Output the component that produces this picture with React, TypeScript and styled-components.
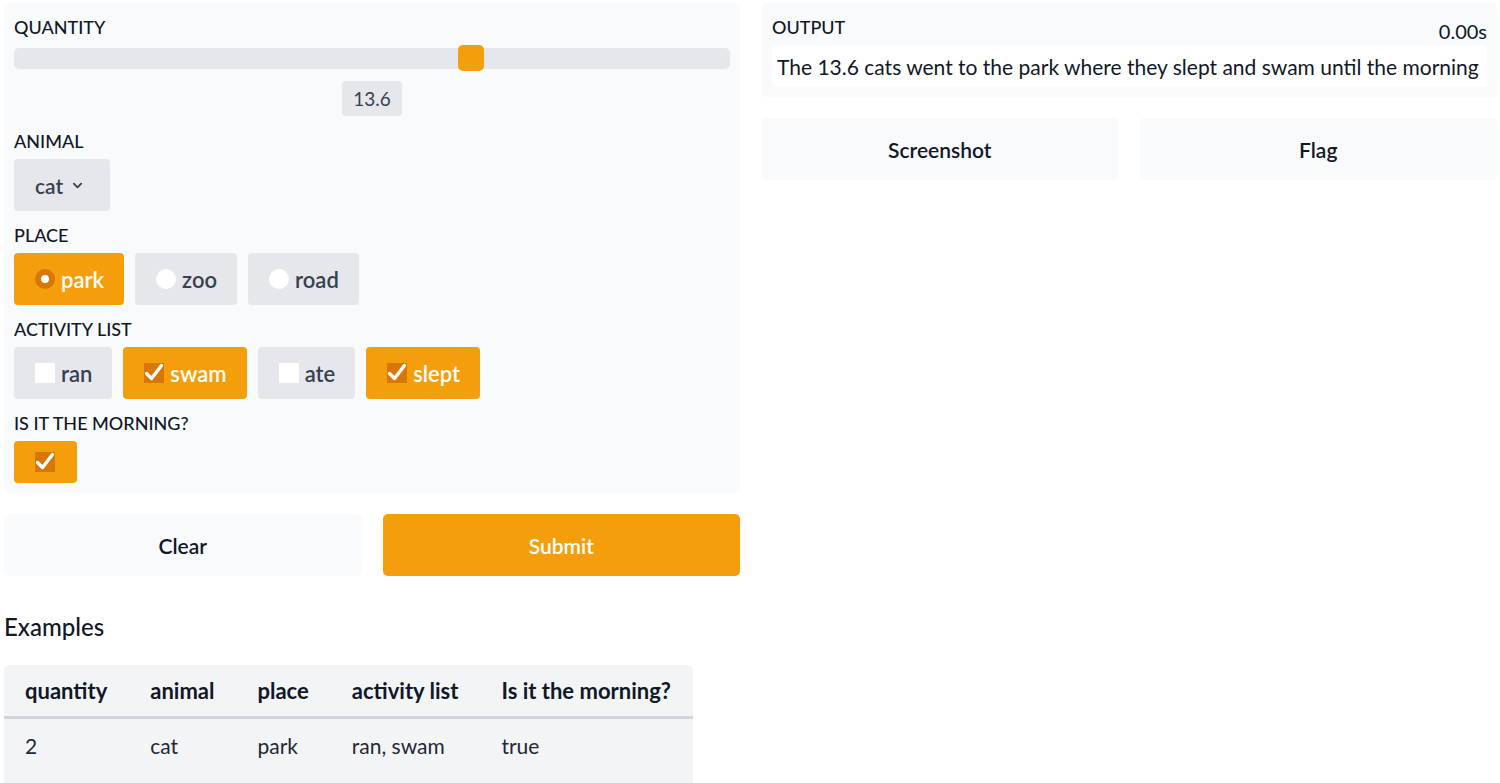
import React from "react";
import styled, { createGlobalStyle } from "styled-components";

const Global = createGlobalStyle`
  html, body { margin: 0; padding: 0; background: #ffffff; }
  body { font-family: Lato, "Noto Sans", sans-serif; color: #111827; }
  * { box-sizing: border-box; }
`;

const Page = styled.div`
  display: grid;
  grid-template-columns: 736px 736px;
  column-gap: 21px;
  padding: 3px 3px 0 4px;
  align-items: start;
`;

const Column = styled.div`
  display: flex;
  flex-direction: column;
`;

const Panel = styled.div`
  background: #f9fafb;
  border-radius: 5px;
  padding: 10px 10px 10px 10px;
  display: flex;
  flex-direction: column;
  gap: 10px;
`;

const Field = styled.div`
  display: flex;
  flex-direction: column;
  align-items: flex-start;
`;

const Label = styled.div`
  font-size: 18px;
  line-height: 28px;
  font-weight: 500;
  text-transform: uppercase;
  color: #111827;
  margin-bottom: 4px;
`;

const SliderWrap = styled.div`
  position: relative;
  width: 100%;
  height: 26px;
  display: flex;
  align-items: center;
`;

const Track = styled.div`
  width: 100%;
  height: 21px;
  background: #e5e7eb;
  border-radius: 5px;
`;

const Thumb = styled.div`
  position: absolute;
  top: 0;
  width: 26px;
  height: 26px;
  border-radius: 5px;
  background: #f59e0b;
`;

const ValueRow = styled.div`
  width: 100%;
  display: flex;
  justify-content: center;
  margin-top: 10px;
  margin-bottom: 1px;
`;

const ValueBox = styled.div`
  background: #e5e7eb;
  border-radius: 4px;
  width: 60px;
  height: 35px;
  display: flex;
  align-items: center;
  justify-content: center;
  font-size: 19px;
  color: #374151;
`;

const Dropdown = styled.div`
  background: #e5e7eb;
  border-radius: 4px;
  height: 52px;
  padding: 0 27px 0 21px;
  display: flex;
  align-items: center;
  gap: 9px;
  font-size: 21px;
  font-weight: 600;
  color: #374151;
`;

const OptionRow = styled.div`
  display: flex;
  gap: 11px;
`;

const Pill = styled.div<{ $on?: boolean }>`
  height: 52px;
  padding: 0 20px 0 21px;
  border-radius: 4px;
  display: flex;
  align-items: center;
  gap: 6px;
  font-size: 22px;
  font-weight: 600;
  background: ${(p) => (p.$on ? "#f59e0b" : "#e5e7eb")};
  color: ${(p) => (p.$on ? "#ffffff" : "#374151")};
`;

const SmallPill = styled(Pill)`
  height: 42px;
  padding: 0 22px 0 21px;
`;

const Radio = styled.span<{ $on?: boolean }>`
  width: 20px;
  height: 20px;
  border-radius: 50%;
  background: ${(p) => (p.$on ? "#d97706" : "#ffffff")};
  display: inline-flex;
  align-items: center;
  justify-content: center;
  &::after {
    content: "";
    width: 8px;
    height: 8px;
    border-radius: 50%;
    background: #ffffff;
    display: ${(p) => (p.$on ? "block" : "none")};
  }
`;

const Box = styled.span<{ $on?: boolean }>`
  width: 20px;
  height: 20px;
  background: ${(p) => (p.$on ? "#d97706" : "#ffffff")};
  display: inline-flex;
  align-items: center;
  justify-content: center;
`;

const ButtonRow = styled.div`
  display: grid;
  grid-template-columns: 1fr 1fr;
  column-gap: 21px;
  margin-top: 21px;
`;

const Button = styled.div<{ $primary?: boolean }>`
  height: 62px;
  border-radius: 5px;
  display: flex;
  align-items: center;
  justify-content: center;
  font-size: 21px;
  font-weight: 600;
  background: ${(p) => (p.$primary ? "#f59e0b" : "#f9fafb")};
  color: ${(p) => (p.$primary ? "#ffffff" : "#111827")};
`;

const Heading = styled.div`
  font-size: 24px;
  font-weight: 500;
  margin-top: 36px;
  line-height: 30px;
  color: #111827;
`;

const TableWrap = styled.div`
  margin-top: 23px;
  align-self: flex-start;
  background: #f3f4f6;
  border-radius: 5px 5px 0 0;
`;

const Table = styled.table`
  border-collapse: collapse;
`;

const Th = styled.th`
  text-align: left;
  font-weight: 700;
  font-size: 22px;
  height: 52px;
  padding: 0 22px 0 21px;
  border-bottom: 3px solid #d1d5db;
  color: #111827;
  white-space: nowrap;
`;

const Td = styled.td`
  padding: 14px 22px 26px 21px;
  line-height: 26px;
  font-size: 21px;
  color: #1f2937;
  white-space: nowrap;
  vertical-align: top;
`;

const OutPanel = styled.div`
  background: #f9fafb;
  border-radius: 5px;
  padding: 10px 10px 10px 11px;
  display: flex;
  flex-direction: column;
`;

const OutHead = styled.div`
  display: flex;
  justify-content: space-between;
  align-items: flex-end;
`;

const Timer = styled.div`
  font-size: 20px;
  color: #111827;
  line-height: 28px;
`;

const OutBox = styled.div`
  background: #ffffff;
  border-radius: 4px;
  height: 42px;
  padding: 0 5px;
  display: flex;
  align-items: center;
  font-size: 21px;
  color: #111827;
`;

const Check = () => (
  <svg width="20" height="20" viewBox="0 0 20 20">
    <path d="M2.5 10.5 L7.5 15.5 L17.5 2.5" fill="none" stroke="#ffffff" strokeWidth="3.4" strokeLinecap="round" strokeLinejoin="round" />
  </svg>
);

const Chevron = () => (
  <svg width="11" height="11" viewBox="0 0 12 12">
    <path d="M2 4 L6 8 L10 4" fill="none" stroke="#374151" strokeWidth="2" strokeLinecap="round" strokeLinejoin="round" />
  </svg>
);

export default function App() {
  const pct = (458 - 14) / (730 - 14 - 26);
  return (
    <>
      <Global />
      <Page>
        <Column>
          <Panel>
            <Field>
              <Label>Quantity</Label>
              <SliderWrap>
                <Track />
                <Thumb style={{ left: `calc(${pct * 100}% - ${pct * 26}px)` }} />
              </SliderWrap>
              <ValueRow>
                <ValueBox>13.6</ValueBox>
              </ValueRow>
            </Field>
            <Field>
              <Label>Animal</Label>
              <Dropdown>
                cat <Chevron />
              </Dropdown>
            </Field>
            <Field>
              <Label>Place</Label>
              <OptionRow>
                <Pill $on><Radio $on />park</Pill>
                <Pill><Radio />zoo</Pill>
                <Pill><Radio />road</Pill>
              </OptionRow>
            </Field>
            <Field>
              <Label>Activity list</Label>
              <OptionRow>
                <Pill><Box />ran</Pill>
                <Pill $on><Box $on><Check /></Box>swam</Pill>
                <Pill><Box />ate</Pill>
                <Pill $on><Box $on><Check /></Box>slept</Pill>
              </OptionRow>
            </Field>
            <Field>
              <Label>Is it the morning?</Label>
              <SmallPill $on><Box $on><Check /></Box></SmallPill>
            </Field>
          </Panel>
          <ButtonRow>
            <Button>Clear</Button>
            <Button $primary>Submit</Button>
          </ButtonRow>
          <Heading>Examples</Heading>
          <TableWrap>
            <Table>
              <thead>
                <tr>
                  <Th>quantity</Th>
                  <Th>animal</Th>
                  <Th>place</Th>
                  <Th>activity list</Th>
                  <Th>Is it the morning?</Th>
                </tr>
              </thead>
              <tbody>
                <tr>
                  <Td>2</Td>
                  <Td>cat</Td>
                  <Td>park</Td>
                  <Td>ran, swam</Td>
                  <Td>true</Td>
                </tr>
              </tbody>
            </Table>
          </TableWrap>
        </Column>
        <Column>
          <OutPanel>
            <OutHead>
              <Label>Output</Label>
              <Timer>0.00s</Timer>
            </OutHead>
            <OutBox>The 13.6 cats went to the park where they slept and swam until the morning</OutBox>
          </OutPanel>
          <ButtonRow>
            <Button>Screenshot</Button>
            <Button>Flag</Button>
          </ButtonRow>
        </Column>
      </Page>
    </>
  );
}
